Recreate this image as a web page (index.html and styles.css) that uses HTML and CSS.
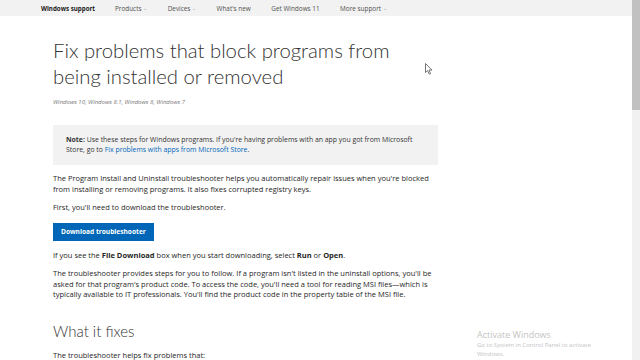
FILE: index.html
```html
<!DOCTYPE html>
<html lang="en">
<head>
    <meta charset="UTF-8">
    <meta name="viewport" content="width=device-width, initial-scale=1.0">
    <title>Fix problems that block programs from being installed or removed</title>
    <link rel="stylesheet" href="styles.css">
</head>
<body>
    <div class="page">
        <!-- top navigation -->
        <nav class="topnav">
            <span class="brand">Windows support</span>
            <span class="nav-item">Products <span class="caret">⌄</span></span>
            <span class="nav-item">Devices <span class="caret">⌄</span></span>
            <span class="nav-item">What's new</span>
            <span class="nav-item">Get Windows 11</span>
            <span class="nav-item">More support <span class="caret">⌄</span></span>
        </nav>

        <main class="article">
            <h1>Fix problems that block programs from being installed or removed</h1>
            <p class="applies">Windows 10, Windows 8.1, Windows 8, Windows 7</p>

            <div class="note">
                <b>Note:</b> Use these steps for Windows programs. If you're having problems with an app you got from Microsoft Store, go to <a href="#">Fix problems with apps from Microsoft Store</a>.
            </div>

            <p>The Program Install and Uninstall troubleshooter helps you automatically repair issues when you're blocked from installing or removing programs. It also fixes corrupted registry keys.</p>
            <p>First, you'll need to download the troubleshooter.</p>

            <button class="download-btn">Download troubleshooter</button>

            <p>If you see the <b>File Download</b> box when you start downloading, select <b>Run</b> or <b>Open</b>.</p>
            <p>The troubleshooter provides steps for you to follow. If a program isn't listed in the uninstall options, you'll be asked for that program's product code. To access the code, you'll need a tool for reading MSI files—which is typically available to IT professionals. You'll find the product code in the property table of the MSI file.</p>

            <h2>What it fixes</h2>
            <p>The troubleshooter helps fix problems that:</p>
        </main>

        <!-- mouse pointer -->
        <svg class="pointer" width="8" height="12" viewBox="0 0 8 12">
            <path d="M0.5 0.5 L0.5 9.5 L2.6 7.6 L4.2 11.2 L5.6 10.6 L4 7.1 L7 7.1 Z" fill="#fff" stroke="#555" stroke-width="0.8"/>
        </svg>

        <!-- windows watermark -->
        <div class="activate">
            <div class="activate-title">Activate Windows</div>
            <div>Go to System in Control Panel to activate Windows.</div>
        </div>
    </div>
    <div class="scrollbar"><div class="thumb"></div></div>
</body>
</html>
```

FILE: styles.css
```css
body {
    margin: 0;
    height: 360px;
    overflow: hidden;
    display: flex;
    font-family: "Open Sans", "Noto Sans", sans-serif;
    color: #262626;
    background: #fff;
}
.page {
    flex: 1;
    position: relative;
}
/* top navigation */
.topnav {
    height: 16px;
    background: #f2f2f2;
    display: flex;
    align-items: center;
    padding-left: 41px;
    font-size: 6.4px;
    color: #505050;
}
.brand {
    font-weight: bold;
    color: #1a1a1a;
    font-size: 6.2px;
    margin-right: 20px;
}
.nav-item {
    margin-right: 20.5px;
}
.caret {
    font-size: 5px;
    color: #999;
    position: relative;
    top: -1px;
}
/* article */
.article {
    padding-left: 53px;
    width: 385px;
}
h1 {
    font-family: Lato, "Open Sans", sans-serif;
    font-weight: 300;
    font-size: 20.3px;
    line-height: 26px;
    margin: 21px 0 0;
    color: #333;
}
.applies {
    font-style: italic;
    font-size: 6px;
    color: #777;
    margin: 8px 0 0;
}
.note {
    background: #f2f2f2;
    margin-top: 17px;
    padding: 10px 21px 10px 13px;
    font-size: 6.9px;
    line-height: 10.4px;
    color: #333;
}
.note a {
    color: #0067b8;
    text-decoration: none;
}
p {
    font-size: 7.5px;
    line-height: 10.5px;
    margin: 8px 0 0;
}
.download-btn {
    display: block;
    margin-top: 10px;
    background: #0067b8;
    color: #fff;
    border: none;
    font-family: inherit;
    font-weight: bold;
    font-size: 6.6px;
    height: 18px;
    padding: 0 8px;
}
.download-btn + p {
    margin-top: 9px;
}
h2 {
    font-family: Lato, "Open Sans", sans-serif;
    font-weight: 300;
    font-size: 15px;
    margin: 22px 0 0;
    color: #333;
}
h2 + p {
    margin-top: 10px;
}
/* overlays */
.pointer {
    position: absolute;
    left: 425px;
    top: 63px;
}
.activate {
    position: absolute;
    left: 477px;
    top: 329px;
    font-size: 6px;
    line-height: 9px;
    color: #c4c4c4;
    width: 140px;
}
.activate-title {
    font-size: 9px;
    line-height: 12px;
}
/* scrollbar */
.scrollbar {
    width: 8px;
    background: #f1f1f1;
}
.thumb {
    height: 110px;
    background: #c1c1c1;
}
```
